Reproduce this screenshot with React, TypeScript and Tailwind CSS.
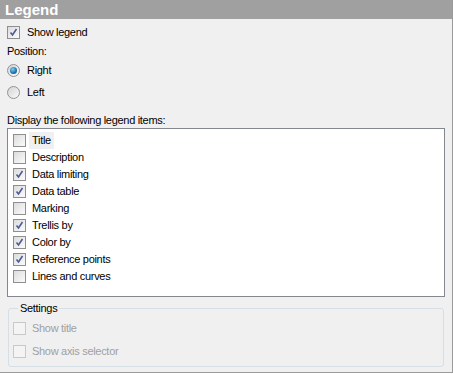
import React from 'react'

const ITEMS: { label: string; checked: boolean }[] = [
  { label: 'Title', checked: false },
  { label: 'Description', checked: false },
  { label: 'Data limiting', checked: true },
  { label: 'Data table', checked: true },
  { label: 'Marking', checked: false },
  { label: 'Trellis by', checked: true },
  { label: 'Color by', checked: true },
  { label: 'Reference points', checked: true },
  { label: 'Lines and curves', checked: false },
]

function Check({ checked, disabled }: { checked?: boolean; disabled?: boolean }) {
  return (
    <span
      className={
        disabled
          ? 'flex h-[13px] w-[13px] shrink-0 items-center justify-center border border-[#c9c9c9] bg-[#f4f4f4]'
          : 'flex h-[13px] w-[13px] shrink-0 items-center justify-center border border-[#8f8f8f] bg-gradient-to-br from-[#dcdcdc] to-[#fbfbfb] p-[1px]'
      }
    >
      {checked && (
        <svg width="9" height="9" viewBox="0 0 9 9">
          <path d="M1.5 4.5 L3.5 7 L7.5 1" fill="none" stroke="#4a5b96" strokeWidth="1.6" />
        </svg>
      )}
    </span>
  )
}

function Radio({ checked }: { checked?: boolean }) {
  return (
    <span className="flex h-[13px] w-[13px] shrink-0 items-center justify-center rounded-full border border-[#939393] bg-gradient-to-br from-[#d4d4d4] to-[#fafafa]">
      {checked && (
        <span className="h-[7px] w-[7px] rounded-full bg-[radial-gradient(circle_at_40%_35%,#7fd0f5,#1b6fa8_60%,#0d4a7a)]" />
      )}
    </span>
  )
}

export default function App() {
  return (
    <div className="h-[373px] w-[453px] border-r border-b border-[#9a9a9a] bg-[#f0f0f0] font-['Liberation_Sans',Arial,sans-serif] text-[11px] leading-[13px] tracking-[-0.3px] text-black">
      <div className="flex h-[19px] items-center bg-[#a0a0a0] pl-[5px] text-[15px] font-bold tracking-normal text-white">Legend</div>

      <div className="px-[7px]">
        <label className="mt-[7px] flex h-[13px] items-center gap-[7px]">
          <Check checked />
          <span>Show legend</span>
        </label>
        <div className="mt-[6px]">Position:</div>
        <label className="mt-[6px] flex h-[13px] items-center gap-[7px]">
          <Radio checked />
          <span>Right</span>
        </label>
        <label className="mt-[9px] flex h-[13px] items-center gap-[7px]">
          <Radio />
          <span>Left</span>
        </label>
        <div className="mt-[15px]">Display the following legend items:</div>
      </div>

      <div className="mx-[7px] mt-[1px] h-[169px] border border-[#828790] bg-white pt-[3px]">
        {ITEMS.map((item, i) => (
          <div key={item.label} className="flex h-[17px] items-center pl-[5px]">
            <Check checked={item.checked} />
            <span className={i === 0 ? 'ml-[3px] bg-[#f0f0f0] px-[3px] leading-[17px]' : 'ml-[6px]'}>{item.label}</span>
          </div>
        ))}
      </div>

      <fieldset className="mx-[8px] mt-[5px] h-[65px] rounded-[3px] border border-[#d5dfe5] px-[4px]">
        <legend className="ml-[5px] px-[2px]">Settings</legend>
        <label className="mt-[7px] flex h-[13px] items-center gap-[6px] text-[#a0a0a0]">
          <Check disabled />
          <span>Show title</span>
        </label>
        <label className="mt-[10px] flex h-[13px] items-center gap-[6px] text-[#a0a0a0]">
          <Check disabled />
          <span>Show axis selector</span>
        </label>
      </fieldset>
    </div>
  )
}
